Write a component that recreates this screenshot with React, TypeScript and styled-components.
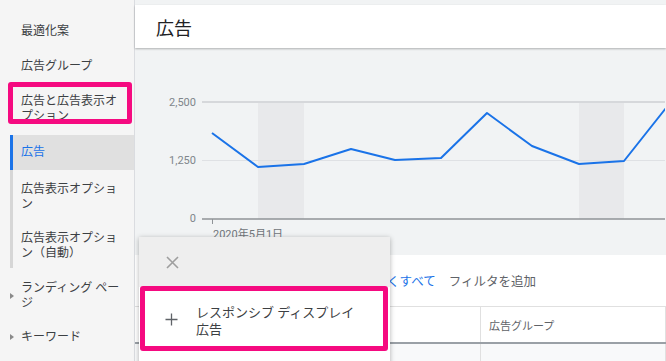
import styled, { createGlobalStyle } from "styled-components";

const GlobalStyle = createGlobalStyle`
  html, body {
    margin: 0;
    padding: 0;
    width: 666px;
    height: 361px;
    overflow: hidden;
    background: #f1f3f4;
  }
  body {
    font-family: Roboto, "Noto Sans CJK JP", "Noto Sans", sans-serif;
    color: #3c4043;
  }
`;

const PINK = "#f50a80";

const Page = styled.div`
  display: flex;
  width: 666px;
  height: 361px;
  position: relative;
  overflow: hidden;
`;

const Sidebar = styled.nav`
  width: 135px;
  flex-shrink: 0;
  background: #f5f5f5;
  border-right: 1px solid #dadce0;
  padding-top: 14px;
  box-sizing: border-box;
  display: flex;
  flex-direction: column;
`;

const NavItem = styled.div<{ $highlight?: boolean }>`
  position: relative;
  padding: 10px 10px 10px 21px;
  font-size: 12px;
  line-height: 15px;
  color: #3c4043;
  padding-bottom: ${(p) => (p.$highlight ? "11px" : "10px")};
`;

const Highlight = styled.div`
  position: absolute;
  left: 8px;
  right: 2px;
  top: -2px;
  bottom: 11px;
  border: 5px solid ${PINK};
  border-radius: 3px;
  pointer-events: none;
`;

const SubGroup = styled.div`
  margin-left: 10px;
  display: flex;
  flex-direction: column;
`;

const SubItem = styled.div<{ $active?: boolean }>`
  border-left: 3px solid ${(p) => (p.$active ? "#1a73e8" : "#d6d6d6")};
  background: ${(p) => (p.$active ? "#e0e0e0" : "transparent")};
  color: ${(p) => (p.$active ? "#1a73e8" : "#3c4043")};
  padding: ${(p) => (p.$active ? "10px 10px 10px 8px" : "12px 10px 7px 8px")};
  font-size: 12px;
  line-height: 15px;
`;

const ExpandItem = styled.div`
  position: relative;
  padding: 13px 10px 6px 21px;
  font-size: 12px;
  line-height: 15px;
  color: #3c4043;

  &::before {
    content: "";
    position: absolute;
    left: 10px;
    top: calc(50% + 3px);
    transform: translateY(-50%);
    border-left: 4px solid #8a8a8a;
    border-top: 3px solid transparent;
    border-bottom: 3px solid transparent;
  }
`;

const Main = styled.main`
  flex: 1;
  display: flex;
  flex-direction: column;
  padding-top: 5px;
  background: #f1f3f4;
`;

const Header = styled.header`
  height: 43px;
  background: #fff;
  box-shadow: 0 1px 2px rgba(0, 0, 0, 0.28);
  display: flex;
  align-items: center;
  padding-left: 21px;
  font-size: 18px;
  color: #202124;
  position: relative;
  z-index: 1;
`;

const ChartArea = styled.section`
  height: 207px;
  flex-shrink: 0;
`;

const Table = styled.section`
  flex: 1;
  background: #fff;
  display: flex;
  flex-direction: column;
`;

const FilterRow = styled.div`
  height: 52px;
  border-bottom: 1px solid #e0e0e0;
  display: flex;
  align-items: center;
  padding-left: 177px;
  font-size: 12.5px;
  box-sizing: border-box;
  white-space: nowrap;
`;

const FilterChip = styled.span`
  color: #1a73e8;
`;

const AddFilter = styled.span`
  color: #5f6368;
  margin-left: 13px;
`;

const HeadRow = styled.div`
  height: 37px;
  display: flex;
  border-bottom: 2px solid #9aa0a6;
  box-sizing: border-box;
`;

const HeadCell = styled.div<{ $width?: number }>`
  width: ${(p) => (p.$width ? `${p.$width}px` : "auto")};
  flex: ${(p) => (p.$width ? "none" : 1)};
  border-right: 1px solid #e0e0e0;
  display: flex;
  align-items: center;
  padding-left: 8px;
  font-size: 11px;
  color: #5f6368;
  box-sizing: border-box;
`;

const BodyRow = styled.div`
  flex: 1;
  display: flex;
  background: #f8f9fa;
`;

const BodyCell = styled.div<{ $width?: number }>`
  width: ${(p) => (p.$width ? `${p.$width}px` : "auto")};
  flex: ${(p) => (p.$width ? "none" : 1)};
  border-right: 1px solid #e0e0e0;
  box-sizing: border-box;
`;

const Menu = styled.div`
  position: absolute;
  left: 139px;
  top: 237px;
  width: 251px;
  height: 140px;
  background: #fff;
  box-shadow: 0 1px 5px rgba(0, 0, 0, 0.3);
  display: flex;
  flex-direction: column;
  z-index: 5;
`;

const MenuTop = styled.div`
  height: 50px;
  background: #eeeeee;
  display: flex;
  align-items: center;
  padding-left: 27px;
`;

const MenuOption = styled.div`
  position: relative;
  display: flex;
  align-items: center;
  height: 64px;
  padding-left: 26px;
  gap: 18px;
  font-size: 13px;
  line-height: 17px;
  color: #3c4043;

  & > span {
    margin-top: 3px;
  }
`;

const OptionHighlight = styled.div`
  position: absolute;
  left: 1px;
  right: 2px;
  top: -1px;
  bottom: 0;
  border: 5px solid ${PINK};
  border-radius: 3px;
  pointer-events: none;
`;

const points: [number, number][] = [
  [77, 85],
  [123, 119],
  [169, 116],
  [216, 101],
  [260, 112],
  [306, 110],
  [352, 65],
  [397, 98],
  [444, 116],
  [489, 113],
  [531, 60],
];

function Chart() {
  const label = { fontSize: 11, fill: "#80868b", fontFamily: "Roboto, sans-serif" };
  return (
    <svg width="530" height="207" viewBox="0 0 530 207">
      <rect x="123" y="54" width="46" height="117" fill="#e8e9eb" />
      <rect x="444" y="54" width="45" height="117" fill="#e8e9eb" />
      <line x1="67" y1="54" x2="530" y2="54" stroke="#d6d8db" strokeWidth="2" />
      <line x1="67" y1="112.5" x2="530" y2="112.5" stroke="#dfe1e4" strokeWidth="1" />
      <line x1="67" y1="171" x2="530" y2="171" stroke="#8f9397" strokeWidth="1.5" />
      <line x1="77.5" y1="171" x2="77.5" y2="176" stroke="#8f9397" strokeWidth="1" />
      <text x="61" y="58" textAnchor="end" style={label}>2,500</text>
      <text x="61" y="116" textAnchor="end" style={label}>1,250</text>
      <text x="61" y="174" textAnchor="end" style={label}>0</text>
      <text
        x="78"
        y="190"
        style={{ ...label, fontFamily: "Roboto, 'Noto Sans CJK JP', sans-serif", fill: "#70757a" }}
      >
        2020年5月1日
      </text>
      <polyline
        points={points.map((p) => p.join(",")).join(" ")}
        fill="none"
        stroke="#1a73e8"
        strokeWidth="2"
        strokeLinejoin="round"
      />
    </svg>
  );
}

function CloseIcon() {
  return (
    <svg width="13" height="13" viewBox="0 0 13 13">
      <path d="M1 1 L12 12 M12 1 L1 12" stroke="#9e9e9e" strokeWidth="1.6" />
    </svg>
  );
}

function PlusIcon() {
  return (
    <svg width="13" height="13" viewBox="0 0 13 13">
      <path d="M6.5 0.5 V12.5 M0.5 6.5 H12.5" stroke="#5f6368" strokeWidth="1.3" />
    </svg>
  );
}

export default function App() {
  return (
    <>
      <GlobalStyle />
      <Page>
        <Sidebar>
          <NavItem>最適化案</NavItem>
          <NavItem>広告グループ</NavItem>
          <NavItem $highlight>
            広告と広告表示オ
            <br />
            プション
            <Highlight />
          </NavItem>
          <SubGroup>
            <SubItem $active>広告</SubItem>
            <SubItem>
              広告表示オプショ
              <br />ン
            </SubItem>
            <SubItem>
              広告表示オプショ
              <br />
              ン（自動）
            </SubItem>
          </SubGroup>
          <ExpandItem>
            ランディング ペー
            <br />ジ
          </ExpandItem>
          <ExpandItem>キーワード</ExpandItem>
        </Sidebar>
        <Main>
          <Header>広告</Header>
          <ChartArea>
            <Chart />
          </ChartArea>
          <Table>
            <FilterRow>
              <FilterChip>削除済みを除くすべて</FilterChip>
              <AddFilter>フィルタを追加</AddFilter>
            </FilterRow>
            <HeadRow>
              <HeadCell $width={346}>広告</HeadCell>
              <HeadCell>広告グループ</HeadCell>
            </HeadRow>
            <BodyRow>
              <BodyCell $width={346} />
              <BodyCell />
            </BodyRow>
          </Table>
        </Main>
        <Menu>
          <MenuTop>
            <CloseIcon />
          </MenuTop>
          <MenuOption>
            <PlusIcon />
            <span>
              レスポンシブ ディスプレイ
              <br />
              広告
            </span>
            <OptionHighlight />
          </MenuOption>
        </Menu>
      </Page>
    </>
  );
}
